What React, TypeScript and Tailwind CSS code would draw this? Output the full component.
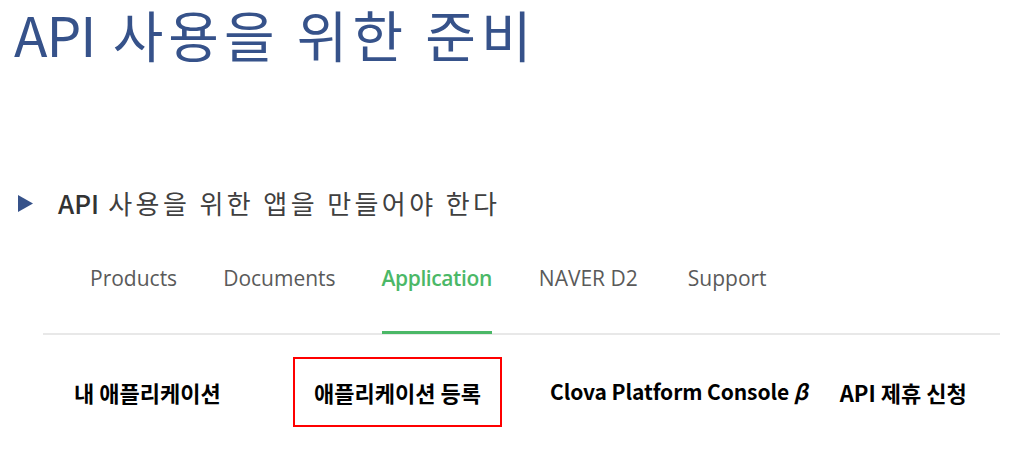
const kr = { fontFamily: '"Noto Sans CJK KR", "Noto Sans", sans-serif' };

const tabs = [
  { label: "Products", cls: "" },
  { label: "Documents", cls: "" },
  { label: "Application", cls: "" },
  { label: "NAVER D2", cls: "ml-[1px]" },
  { label: "Support", cls: "ml-[4px]" },
];

export default function App() {
  return (
    <div className="w-[1035px] h-[473px] bg-white overflow-hidden relative" style={kr}>
      <h1 className="pl-[14px] pt-[2px] text-[55px] leading-[62px] text-[#36528a] whitespace-nowrap">
        <span className="tracking-[-1px]">API</span>
        <span className="tracking-[5px]"> 사용을 위한 준비</span>
      </h1>

      <div className="flex items-center mt-[124px] h-[30px]">
        <svg width="16" height="17" viewBox="0 0 16 17" className="ml-[18px]">
          <polygon points="0,0 15,8.5 0,17" fill="#36528a" />
        </svg>
        <span className="ml-[24px] text-[26px] leading-[30px] text-[#404040] tracking-[3.4px] whitespace-nowrap">
          <span className="tracking-[0px] font-medium text-[#333]">API</span> 사용을 위한 앱을 만들어야 한다
        </span>
      </div>

      <div className="ml-[43px] w-[957px] mt-[33px] border-b-2 border-[#e8e8e8]">
        <div className="flex pl-[47px] gap-[46px] h-[82px]" style={{ fontFamily: '"Open Sans", sans-serif' }}>
          {tabs.map((t) => {
            const on = t.label === "Application";
            return (
              <div
                key={t.label}
                className={
                  "flex items-start pt-[15px] text-[21px] leading-[24px] border-b-[3px] mb-[-1px] " +
                  t.cls +
                  " " +
                  (on
                    ? "text-[#4bb867] border-[#4bb867] font-semibold tracking-[-0.4px]"
                    : "text-[#5a5a5a] border-transparent")
                }
              >
                {t.label}
              </div>
            );
          })}
        </div>
      </div>

      <div className="flex items-center mt-[22px] font-bold text-[22px] text-black whitespace-nowrap">
        <span className="ml-[74px] w-[146px]">내 애플리케이션</span>
        <div className="ml-[73px] w-[209px] h-[70px] border-2 border-[#ff0000] flex items-center justify-center">
          애플리케이션 등록
        </div>
        <span className="ml-[48px] text-[21px] tracking-[-0.1px]">
          Clova Platform Console <i className="font-bold">β</i>
        </span>
        <span className="ml-[32px]">API 제휴 신청</span>
      </div>
    </div>
  );
}
